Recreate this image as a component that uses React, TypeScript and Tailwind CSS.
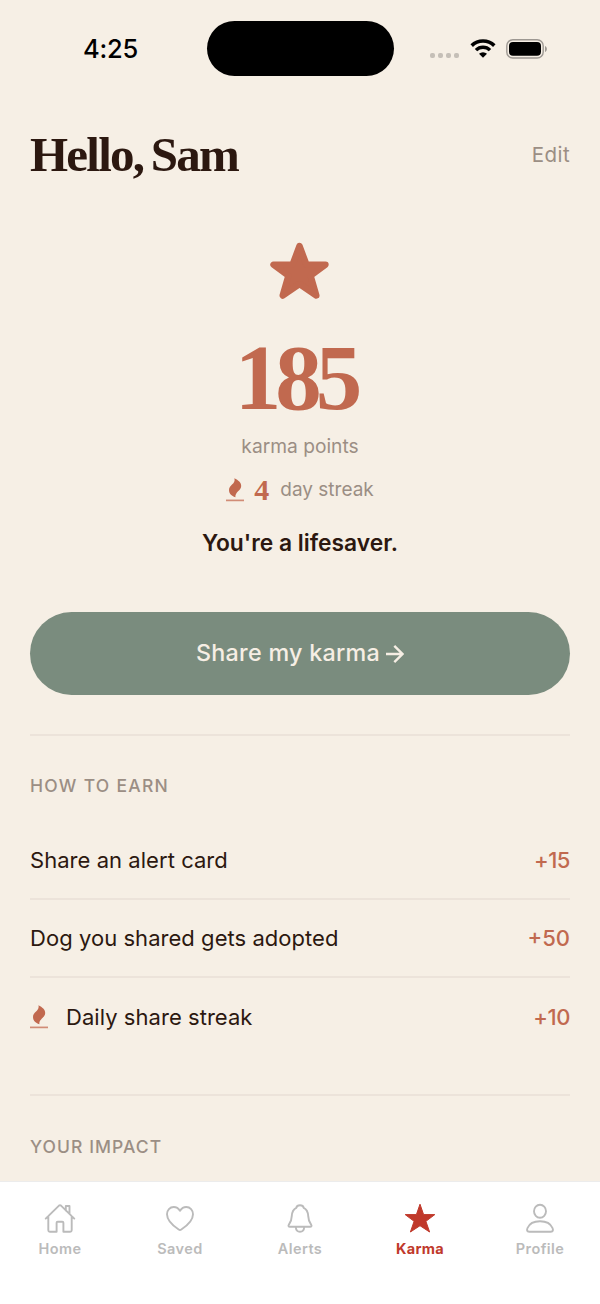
import React from 'react';

interface EarnItem {
  label: string;
  points: string;
  pointsClass: string;
  streak?: boolean;
}

const earnItems: EarnItem[] = [
  { label: 'Share an alert card', points: '+15', pointsClass: 'tracking-[-0.02em]' },
  { label: 'Dog you shared gets adopted', points: '+50', pointsClass: 'tracking-[0em]' },
  { label: 'Daily share streak', points: '+10', pointsClass: 'tracking-[-0.02em]', streak: true },
];

function FlameIcon() {
  return (
    <svg width="18" height="24" viewBox="0 0 18 24" fill="none">
      <path
        d="M8.400.200C12.400 2.200 15.200 4.400 15.200 8c0 4.600-6.400 6-5.800 11.200C5.400 18 3 15.400 3 12 3 6.800 10 6 8.400.200Z"
        fill="#c1694f"
      />
      <path d="M0 22.400h18" stroke="#d18c76" strokeWidth="1.700" />
    </svg>
  );
}

function StatusBar() {
  return (
    <div className="flex h-[97px] shrink-0 items-center">
      <div className="w-[206.500px] pl-[83px] font-['Inter',sans-serif] text-[25.500px] font-medium leading-none tracking-[-0.01em] text-black">
        4:25
      </div>
      <div className="h-[55px] w-[187px] rounded-full bg-black" />
      <div className="flex items-center pl-[36.500px]">
        <div className="mt-[14px] flex gap-[3px]">
          {[0, 1, 2, 3].map((i) => (
            <span key={i} className="size-[5px] rounded-[2px] bg-[#c5bfb7]" />
          ))}
        </div>
        <svg className="ml-[11px]" width="26" height="19" viewBox="0 0 26 19" fill="none">
          <path d="M1.700 6.600a16.300 16.300 0 0 1 22.600 0" stroke="#000" strokeWidth="3.600" />
          <path d="M6 11.100a10 10 0 0 1 14 0" stroke="#000" strokeWidth="3.400" />
          <path d="M9 14.700a6 6 0 0 1 8 0L13 18.800Z" fill="#000" />
        </svg>
        <svg className="ml-[10px]" width="42" height="20" viewBox="0 0 42 20" fill="none">
          <rect x=".8" y=".8" width="36.400" height="18.200" rx="6" stroke="#9d9892" strokeWidth="1.400" />
          <rect x="3" y="3" width="32" height="13.800" rx="4" fill="#000" />
          <path d="M39 7c2.500.8 2.500 5.200 0 6Z" fill="#9d9892" />
        </svg>
      </div>
    </div>
  );
}

function HomeIcon() {
  return (
    <svg width="32" height="32" viewBox="0 0 32 32" fill="none" stroke="currentColor" strokeWidth="1.900" strokeLinecap="round" strokeLinejoin="round">
      <path d="M1.700 15.600 15 2.600q1-.8 2 0l13.300 13M21.800 7.500V3h3.700v7.700M4.300 13.200v14.100c0 1 .6 1.500 1.500 1.500h6.800v-9c0-.7.400-1.100 1.100-1.100h4.600c.7 0 1.100.4 1.100 1.100v9h6.800c.900 0 1.500-.5 1.500-1.500V13.200" />
    </svg>
  );
}

function HeartIcon() {
  return (
    <svg width="32" height="32" viewBox="0 0 32 32" fill="none" stroke="currentColor" strokeWidth="1.900" strokeLinejoin="round">
      <path d="M16 7.800C14.500 5.300 12.300 4 9.700 4 5.900 4 3 7.100 3 11.200c0 6.500 6 11.500 11.700 15.300.9.600 1.700.6 2.600 0C23 22.700 29 17.700 29 11.200 29 7.100 26.100 4 22.300 4 19.700 4 17.500 5.300 16 7.800Z" />
    </svg>
  );
}

function BellIcon() {
  return (
    <svg width="32" height="32" viewBox="0 0 32 32" fill="none" stroke="currentColor" strokeWidth="1.900" strokeLinecap="round" strokeLinejoin="round">
      <path d="M12.300 4.800C9 6.400 8 9.200 7.800 12.900 7.600 18 6.300 19.500 4.900 21.500c-.9 1.400-.4 2.300 1 2.300h20.200c1.400 0 1.900-.9 1-2.300-1.400-2-2.700-3.500-2.900-8.600-.2-3.700-1.200-6.500-4.500-8.100C18.900 1.400 13.100 1.400 12.300 4.800ZM11.800 24.200c.4 6 8 6 8.400 0" />
    </svg>
  );
}

function StarTabIcon() {
  return (
    <svg width="32" height="32" viewBox="0 0 32 32" fill="currentColor" stroke="currentColor" strokeWidth="1" strokeLinejoin="round">
      <path d="m16 1.200 3.600 10.400h11.200l-8.900 6.700 3.700 10.700L16 22.700 6.400 29l3.700-10.700-8.900-6.700h11.200Z" />
    </svg>
  );
}

function ProfileIcon() {
  return (
    <svg width="32" height="32" viewBox="0 0 32 32" fill="none" stroke="currentColor" strokeWidth="1.900" strokeLinejoin="round">
      <ellipse cx="16" cy="8.300" rx="6" ry="6.500" />
      <path d="M5.200 28.800C2.800 28.800 2.700 27 3.500 25 5.300 20.700 10 18.200 16 18.200S26.700 20.700 28.500 25c.8 2 .7 3.800-1.700 3.800Z" />
    </svg>
  );
}

const tabs = [
  { label: 'Home', icon: <HomeIcon /> },
  { label: 'Saved', icon: <HeartIcon /> },
  { label: 'Alerts', icon: <BellIcon /> },
  { label: 'Karma', icon: <StarTabIcon />, active: true },
  { label: 'Profile', icon: <ProfileIcon /> },
];

export default function App() {
  return (
    <div className="flex h-[1304px] w-[600px] flex-col overflow-hidden bg-[#f6efe5] font-['Inter',sans-serif] text-[#2c1810]">
      <StatusBar />

      <main className="h-[1083.500px] shrink-0 px-[30px]">
        <header className="flex h-[116px] items-center justify-between">
          <h1 className="mb-[2px] whitespace-nowrap font-['Liberation_Serif',serif] text-[49px] font-bold leading-none tracking-[-0.036em] [word-spacing:-3px]">
            Hello, Sam
          </h1>
          <span className="text-[20.500px] tracking-[0.02em] text-[#9b8e84]">Edit</span>
        </header>

        <section className="flex h-[399px] flex-col items-center">
          <svg className="mt-[28px] shrink-0" width="60" height="60" viewBox="0 0 60 60">
            <path
              d="m29.500 5 7 18.600H55.500L40.600 34.700 46.300 54.500 29.500 43 12.700 54.500l5.700-19.800L3.500 23.600h19Z"
              fill="#c1694f"
              stroke="#c1694f"
              strokeWidth="6.400"
              strokeLinejoin="round"
            />
          </svg>
          <div className="mt-[31px] mr-[9px] h-[92px] font-['Liberation_Serif',serif] text-[93px] font-bold leading-[92px] tracking-[-0.065em] text-[#c1694f]">
            185
          </div>
          <div className="mt-[10px] h-6 text-[19.200px] leading-6 text-[#9b8e84]">karma points</div>
          <div className="mt-[20px] flex h-6 items-center">
            <FlameIcon />
            <span className="ml-[10px] font-['Liberation_Serif',serif] text-[30px] font-bold leading-6 text-[#c1694f]">4</span>
            <span className="ml-[11px] text-[19px] leading-6 text-[#9b8e84]">day streak</span>
          </div>
          <div className="mt-[25px] h-8 text-[22.800px] font-semibold leading-8">You're a lifesaver.</div>
        </section>

        <button className="flex h-[83px] w-full items-center justify-center rounded-full bg-[#7a8c7e] text-[23.300px] font-medium tracking-[0.012em] text-[#f6eee4]">
          <span>Share my karma</span>
          <svg className="ml-[6px]" width="18" height="20" viewBox="0 0 18 20" fill="none" stroke="currentColor" strokeWidth="2.400">
            <path d="M0 10h16.500M8.300 1.800l8.200 8.200-8.200 8.200" />
          </svg>
        </button>

        <section className="mt-[39px] border-t-2 border-[#ece3da] pt-[38px]">
          <h2 className="h-6 text-[17.500px] font-medium leading-6 tracking-[0.073em] text-[#9b8e84]">HOW TO EARN</h2>
          <ul className="mt-[23px]">
            {earnItems.map((item, i) => (
              <li
                key={item.label}
                className={
                  i < earnItems.length - 1
                    ? 'flex h-[78.500px] items-center border-b-2 border-[#ece3da] pt-[2px]'
                    : 'flex h-[78px] items-center'
                }
              >
                {item.streak && (
                  <span className="mr-[18px]">
                    <FlameIcon />
                  </span>
                )}
                <span className="whitespace-nowrap text-[22px] tracking-[0.002em]">{item.label}</span>
                <span className={`ml-auto text-[22px] font-medium text-[#c1694f] ${item.pointsClass}`}>{item.points}</span>
              </li>
            ))}
          </ul>
        </section>

        <section className="mt-[38px] border-t-2 border-[#ece3da] pt-[39px]">
          <h2 className="h-6 text-[17.500px] font-medium leading-6 tracking-[0.06em] text-[#9b8e84]">YOUR IMPACT</h2>
        </section>
      </main>

      <nav className="grid flex-1 grid-cols-5 border-t border-[#ececec] bg-white pt-[21.500px]">
        {tabs.map((tab) => (
          <div
            key={tab.label}
            className={
              tab.active
                ? 'flex flex-col items-center text-[#c0392b]'
                : 'flex flex-col items-center text-[#bbbbbb]'
            }
          >
            {tab.icon}
            <span
              className={`mt-[3.500px] text-[14.500px] leading-5 ${tab.active ? 'font-bold tracking-[0.02em]' : 'font-semibold tracking-[0.03em]'}`}
            >
              {tab.label}
            </span>
          </div>
        ))}
      </nav>
    </div>
  );
}
